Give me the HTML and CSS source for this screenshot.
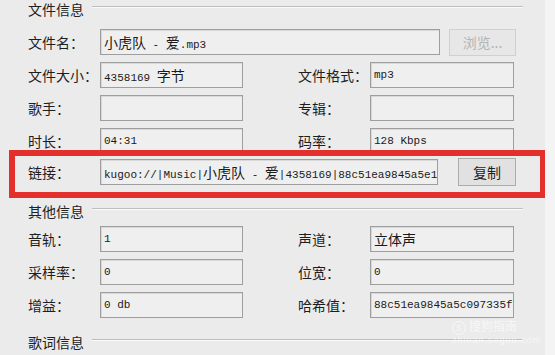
FILE: index.html
```html
<!DOCTYPE html>
<html lang="zh-CN">
<head>
    <meta charset="UTF-8">
    <title>歌曲属性</title>
    <link rel="stylesheet" href="styles.css">
</head>
<body>
    <div class="dialog">
        <div class="group-title"><span>文件信息</span><i class="rule"></i></div>
        <div class="row first">
            <label class="lbl">文件名：</label>
            <div class="field wide"><span class="zh">小虎队</span> - <span class="zh">爱</span>.mp3</div>
            <button class="btn browse" disabled>浏览...</button>
        </div>
        <div class="row">
            <label class="lbl">文件大小：</label>
            <div class="field">4358169 <span class="zh">字节</span></div>
            <label class="lbl right">文件格式：</label>
            <div class="field">mp3</div>
        </div>
        <div class="row">
            <label class="lbl">歌手：</label>
            <div class="field"></div>
            <label class="lbl right">专辑：</label>
            <div class="field"></div>
        </div>
        <div class="row">
            <label class="lbl">时长：</label>
            <div class="field">04:31</div>
            <label class="lbl right">码率：</label>
            <div class="field">128 Kbps</div>
        </div>
        <div class="row link-row">
            <label class="lbl">链接：</label>
            <div class="field link">kugoo://|Music|<span class="zh">小虎队</span> - <span class="zh">爱</span>|4358169|88c51ea9845a5e1</div>
            <button class="btn copy">复制</button>
        </div>

        <div class="group-title second"><span>其他信息</span><i class="rule"></i></div>
        <div class="row first-other">
            <label class="lbl">音轨：</label>
            <div class="field">1</div>
            <label class="lbl right">声道：</label>
            <div class="field"><span class="zh">立体声</span></div>
        </div>
        <div class="row">
            <label class="lbl">采样率：</label>
            <div class="field">0</div>
            <label class="lbl right">位宽：</label>
            <div class="field">0</div>
        </div>
        <div class="row">
            <label class="lbl">增益：</label>
            <div class="field">0 db</div>
            <label class="lbl right">哈希值：</label>
            <div class="field">88c51ea9845a5c097335f</div>
        </div>

        <div class="group-title third"><span>歌词信息</span><i class="rule"></i></div>

        <!-- annotation drawn over the screenshot -->
        <div class="red-mark"></div>
        <div class="watermark">
            <span class="wm-logo">S</span><span class="wm-name">搜狗指南</span>
            <div class="wm-url">zhinan.sogou.com</div>
        </div>
    </div>
</body>
</html>
```

FILE: styles.css
```css
body {
    margin: 0;
    background-color: #f4f4f4;
    font-family: "Noto Sans CJK SC", sans-serif;
    color: #1e1e1e;
}

.dialog {
    position: relative;
    width: 545px;
    height: 355px;
    box-sizing: border-box;
    padding: 2px 0 0 28px;
    background-color: #ebebeb;
    overflow: hidden;
}

.group-title {
    display: flex;
    height: 14px;
    font-size: 14px;
    line-height: 14px;
    color: #222;
}

.group-title .rule {
    flex: 1;
    height: 1px;
    margin: 4px 22px 0 8px;
    background-color: #bdbdbd;
    border-bottom: 1px solid #fafafa;
}

.group-title.second {
    margin-top: 19px;
}

.group-title.third {
    margin-top: 17px;
}

.row {
    display: flex;
    align-items: center;
    height: 26px;
    margin-top: 7px;
}

.row.first {
    margin-top: 13px;
}

.row.link-row {
    margin-top: 5px;
}

.row.first-other {
    margin-top: 8px;
}

.lbl {
    width: 72px;
    font-size: 14px;
    line-height: 26px;
    white-space: nowrap;
}

.lbl.right {
    margin-left: 55px;
}

.field {
    box-sizing: border-box;
    width: 143px;
    height: 26px;
    padding: 0 3px;
    border: 1px solid #9e9e9e;
    box-shadow: inset 1px 1px 0 #d8d8d8;
    background-color: #efefef;
    font-family: "Liberation Mono", monospace;
    font-size: 11px;
    line-height: 24px;
    color: #1a1a1a;
    white-space: nowrap;
    overflow: hidden;
}

.lbl.right + .field {
    width: 144px;
}

.field.wide {
    width: 340px;
}

.field.link {
    width: 338px;
    padding: 0 1px 0 3px;
}

.field .zh {
    font-family: "Noto Sans CJK SC", sans-serif;
    font-size: 14px;
}

.btn {
    box-sizing: border-box;
    font-family: "Noto Sans CJK SC", sans-serif;
    font-size: 14px;
    padding: 0;
    border-radius: 0;
    cursor: pointer;
}

.btn.browse {
    width: 67px;
    height: 27px;
    margin-left: 9px;
    border: 1px solid #d0d0d0;
    background-color: #e7e7e7;
    color: #b4b4b4;
}

.btn.copy {
    width: 58px;
    height: 28px;
    margin-left: 20px;
    border: 1px solid #acacac;
    background-color: #e1e1e1;
    color: #1e1e1e;
}

.red-mark {
    position: absolute;
    left: 9px;
    top: 150px;
    width: 537px;
    height: 48px;
    box-sizing: border-box;
    border: 6px solid #e3302d;
}

.watermark {
    position: absolute;
    left: 452px;
    top: 319px;
    color: rgba(255, 255, 255, 0.6);
    font-size: 12px;
    line-height: 14px;
}

.wm-logo {
    display: inline-block;
    width: 12px;
    height: 12px;
    margin-right: 3px;
    border: 1px solid rgba(255, 255, 255, 0.6);
    border-radius: 50%;
    font-family: "Liberation Sans", sans-serif;
    font-size: 9px;
    line-height: 12px;
    text-align: center;
    vertical-align: middle;
}

.wm-url {
    font-family: "Liberation Sans", sans-serif;
    font-size: 9px;
    line-height: 11px;
    letter-spacing: 1px;
}
```
